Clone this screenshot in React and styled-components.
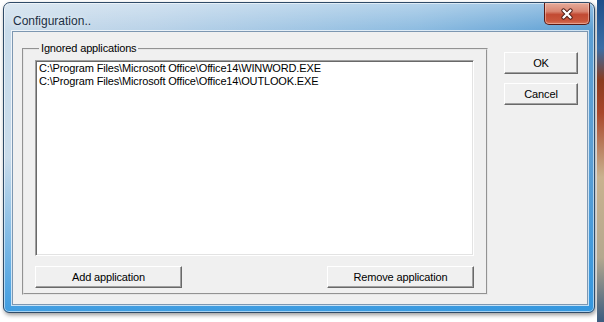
import React from 'react';
import styled, { createGlobalStyle } from 'styled-components';

const GlobalStyle = createGlobalStyle`
  html, body {
    margin: 0;
    padding: 0;
    background: #ffffff;
  }
`;

const Page = styled.div`
  display: flex;
  width: 604px;
  height: 322px;
  padding: 2px 0 0 3px;
  box-sizing: border-box;
  overflow: hidden;
`;

const Window = styled.div`
  display: flex;
  flex-direction: column;
  width: 592px;
  height: 311px;
  box-sizing: border-box;
  border: 1px solid #2f4b68;
  border-radius: 7px 7px 6px 6px;
  padding: 0 6px 7px 8px;
  background:
    linear-gradient(180deg, rgba(255, 255, 255, 0.35) 0px, rgba(255, 255, 255, 0) 28px),
    linear-gradient(180deg, rgba(48, 150, 224, 0) 0%, rgba(48, 150, 224, 0) 50%, rgba(48, 150, 224, 0.9) 100%),
    linear-gradient(90deg, #c9dbea 0%, #b9d2e8 25%, #8cbbe0 70%, #5b9ed3 100%);
  box-shadow: inset 0 0 0 1px rgba(255, 255, 255, 0.55), 1px 2px 4px rgba(0, 0, 0, 0.4);
`;

const TitleBar = styled.div`
  display: flex;
  justify-content: space-between;
  align-items: flex-start;
  height: 28px;
  flex-shrink: 0;
`;

const Title = styled.span`
  margin-top: 11px;
  margin-left: 1px;
  font-family: 'Liberation Sans', Arial, sans-serif;
  font-size: 12px;
  line-height: 14px;
  color: #1b2f44;
  text-shadow: 0 0 6px rgba(255, 255, 255, 0.9);
`;

const CloseButton = styled.div`
  display: flex;
  align-items: center;
  justify-content: center;
  width: 46px;
  height: 22px;
  margin-right: -2px;
  box-sizing: border-box;
  border: 1px solid #5a1a14;
  border-top: none;
  border-radius: 0 0 5px 5px;
  background: linear-gradient(180deg, #e6ab9a 0%, #d98571 40%, #c24a33 55%, #c9563c 85%, #d7755c 100%);
  box-shadow: inset 0 0 0 1px rgba(255, 220, 210, 0.45);
`;

const Client = styled.div`
  flex: 1;
  display: flex;
  gap: 16px;
  padding: 10px 9px 9px 9px;
  border: 1px solid #7d97b1;
  background: #f0f0f0;
  box-shadow: 0 0 0 1px rgba(255, 255, 255, 0.7);
  font-family: 'Liberation Sans', Arial, sans-serif;
  font-size: 11px;
  letter-spacing: -0.15px;
  color: #000;
`;

const Group = styled.fieldset`
  display: flex;
  flex-direction: column;
  width: 467px;
  margin: 0;
  padding: 5px 12px 5px 11px;
  box-sizing: border-box;
  border: 2px groove #e6e6e6;
  min-width: 0;
`;

const Legend = styled.legend`
  padding: 0 2px;
  margin-left: 4px;
  line-height: 13px;
`;

const ListBox = styled.div`
  flex: 1;
  padding: 1px 2px;
  background: #ffffff;
  border: 1px solid;
  border-color: #a0a0a0 #ffffff #ffffff #a0a0a0;
  box-shadow: inset 1px 1px 0 #696969, inset -1px -1px 0 #e3e3e3;
  line-height: 13px;
`;

const ListItem = styled.div`
  white-space: nowrap;
  padding-left: 1px;
`;

const ButtonRow = styled.div`
  display: flex;
  justify-content: space-between;
  margin-top: 10px;
`;

const Button = styled.button`
  width: ${props => props.width}px;
  height: 22px;
  margin: 0;
  padding: 0;
  font-family: 'Liberation Sans', Arial, sans-serif;
  font-size: 11px;
  letter-spacing: -0.15px;
  color: #000;
  background: #f0f0f0;
  border: 1px solid;
  border-color: #ffffff #696969 #696969 #ffffff;
  box-shadow: inset -1px -1px 0 #a0a0a0;
`;

const SideButtons = styled.div`
  display: flex;
  flex-direction: column;
  gap: 9px;
  padding-top: 10px;
`;

const Desktop = styled.div`
  flex: 1;
  margin-left: 2px;
  margin-top: -2px;
  height: 322px;
  background: linear-gradient(180deg, #1e4f8a 0%, #3b6ea6 15%, #8a3b1e 25%, #a8462a 35%, #c9b28f 55%, #b4a88f 80%, #3b5c80 100%);
`;

const CloseGlyph = () => (
  <svg width="14" height="12" viewBox="0 0 14 12">
    <path
      d="M3.5 2.5 L10.5 9.5 M10.5 2.5 L3.5 9.5"
      stroke="#4a1a14"
      strokeWidth="4.2"
      strokeLinecap="round"
    />
    <path
      d="M3.5 2.5 L10.5 9.5 M10.5 2.5 L3.5 9.5"
      stroke="#ffffff"
      strokeWidth="2.4"
      strokeLinecap="round"
    />
  </svg>
);

const apps = [
  'C:\\Program Files\\Microsoft Office\\Office14\\WINWORD.EXE',
  'C:\\Program Files\\Microsoft Office\\Office14\\OUTLOOK.EXE',
];

const App = () => (
  <>
    <GlobalStyle />
    <Page>
      <Window>
        <TitleBar>
          <Title>Configuration..</Title>
          <CloseButton>
            <CloseGlyph />
          </CloseButton>
        </TitleBar>
        <Client>
          <Group>
            <Legend>Ignored applications</Legend>
            <ListBox>
              {apps.map(app => (
                <ListItem key={app}>{app}</ListItem>
              ))}
            </ListBox>
            <ButtonRow>
              <Button width={147}>Add application</Button>
              <Button width={147}>Remove application</Button>
            </ButtonRow>
          </Group>
          <SideButtons>
            <Button width={74}>OK</Button>
            <Button width={74}>Cancel</Button>
          </SideButtons>
        </Client>
      </Window>
      <Desktop />
    </Page>
  </>
);

export default App;
